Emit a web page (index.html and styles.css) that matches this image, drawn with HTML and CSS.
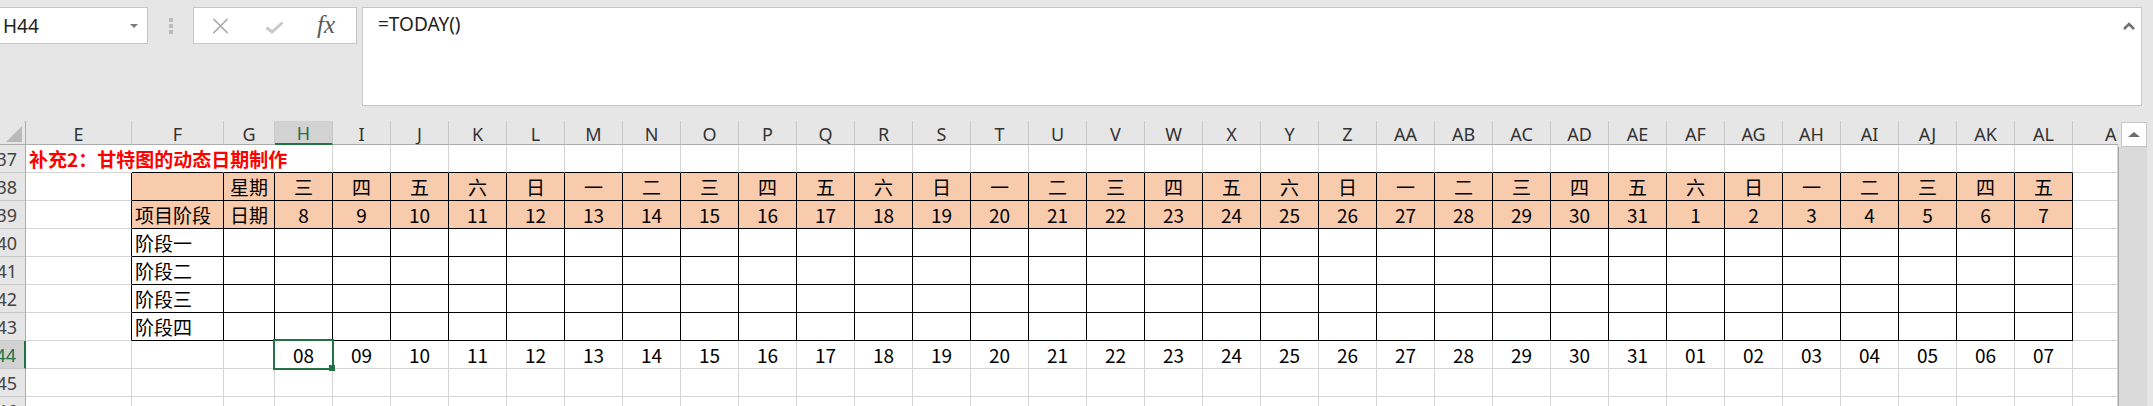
FILE: index.html
```html
<!DOCTYPE html>
<html lang="zh-CN">

<head>
    <meta charset="UTF-8">
    <title>甘特图的动态日期制作</title>
    <link rel="stylesheet" href="styles.css">
</head>

<body>
    <div class="formula-bar">
        <div class="name-box">
            <span>H44</span>
            <span class="drop-arrow"></span>
        </div>
        <div class="grip"><i></i><i></i><i></i></div>
        <div class="fx-box">
            <svg class="icon-cancel" width="17" height="16" viewBox="0 0 17 16">
                <path d="M1.5 1 L15.5 15 M15.5 1 L1.5 15" stroke="#a9a9a9" stroke-width="1.7" fill="none" />
            </svg>
            <svg class="icon-enter" width="19" height="13" viewBox="0 0 19 13">
                <path d="M1.5 6.5 L7 11 L17.5 1.5" stroke="#c9c9c9" stroke-width="3" fill="none" />
            </svg>
            <span class="fx">fx</span>
        </div>
        <div class="formula-input">
            <span>=TODAY()</span>
            <svg class="collapse" width="12" height="8" viewBox="0 0 12 8">
                <path d="M1 7 L6 2 L11 7" stroke="#707070" stroke-width="2.6" fill="none" />
            </svg>
        </div>
    </div>

    <div class="sheet">
        <div class="grid" id="grid"></div>
        <div class="vscroll">
            <div class="scroll-btn"><span class="tri-up"></span></div>
            <div class="scroll-track"></div>
        </div>
    </div>

    <script>
        const grid = document.getElementById('grid');
        const week = ['日', '一', '二', '三', '四', '五', '六'];
        const phases = ['阶段一', '阶段二', '阶段三', '阶段四'];

        function colName(i) {
            return i < 26 ? String.fromCharCode(65 + i) : 'A' + String.fromCharCode(39 + i);
        }

        function add(cls, text) {
            const d = document.createElement('div');
            d.className = 'c ' + cls;
            if (text !== undefined) d.textContent = text;
            grid.appendChild(d);
            return d;
        }

        // column headers
        add('corner').innerHTML = '<span class="tri"></span>';
        ['E', 'F', 'G'].forEach(l => add('ch', l));
        for (let i = 7; i < 38; i++) add(i === 7 ? 'ch on' : 'ch', colName(i));
        add('ch cut', 'AM');

        for (let r = 37; r <= 46; r++) {
            add(r === 44 ? 'rh on' : 'rh', r);

            if (r === 37) {
                add('title ov', '补充2：甘特图的动态日期制作');
                add('ov bt');
                add('ov bt');
                for (let k = 0; k < 31; k++) add('bt');
            } else if (r >= 38 && r <= 43) {
                add('bl');
                if (r === 38) {
                    add('t pk');
                    add('t pk', '星期');
                } else if (r === 39) {
                    add('t pk left', '项目阶段');
                    add('t pk', '日期');
                } else {
                    add('t left', phases[r - 40]);
                    add('t');
                }
                for (let k = 0; k < 31; k++) {
                    const date = k < 24 ? 8 + k : k - 23;
                    if (r === 38) add('t pk', week[(3 + k) % 7]);
                    else if (r === 39) add('t pk', date);
                    else add('t');
                }
            } else if (r === 44) {
                add('');
                add('');
                add('');
                for (let k = 0; k < 31; k++) {
                    const date = k < 24 ? 8 + k : k - 23;
                    const cell = add(k === 0 ? 'sel-cell' : '', String(date).padStart(2, '0'));
                    if (k === 0) cell.insertAdjacentHTML('beforeend', '<span class="sel"></span>');
                }
            } else {
                for (let k = 0; k < 34; k++) add('');
            }
            add('');
        }
    </script>
</body>

</html>
```

FILE: styles.css
```css
body {
    margin: 0;
    width: 2153px;
    height: 406px;
    overflow: hidden;
    background: #e6e6e6;
    font-family: "Noto Sans", Arial, sans-serif;
    color: #222;
}

/* formula bar */

.formula-bar {
    display: flex;
    align-items: flex-start;
    height: 121px;
    padding-top: 7px;
    box-sizing: border-box;
}

.name-box {
    display: flex;
    align-items: center;
    justify-content: space-between;
    width: 149px;
    height: 37px;
    margin-left: -1px;
    padding: 0 9px 0 3px;
    box-sizing: border-box;
    background: #fff;
    border: 1px solid #c6c6c6;
    font-size: 19px;
}

.drop-arrow {
    border-left: 4px solid transparent;
    border-right: 4px solid transparent;
    border-top: 4px solid #7a7a7a;
}

.grip {
    display: flex;
    flex-direction: column;
    align-items: center;
    gap: 2px;
    width: 45px;
    padding-top: 11px;
}

.grip i {
    width: 4px;
    height: 4px;
    background: #bcbcbc;
}

.fx-box {
    display: flex;
    align-items: center;
    width: 164px;
    height: 37px;
    padding-left: 18px;
    box-sizing: border-box;
    background: #fff;
    border: 1px solid #c6c6c6;
}

.icon-enter {
    margin-left: 36px;
    margin-top: 4px;
}

.fx {
    margin-left: 33px;
    font-family: "Liberation Serif", serif;
    font-style: italic;
    font-size: 25px;
    color: #5a5a5a;
    line-height: 1;
    margin-top: -3px;
}

.formula-input {
    display: flex;
    align-items: flex-start;
    justify-content: space-between;
    width: 1780px;
    height: 99px;
    margin-left: 5px;
    padding: 3px 6px 0 15px;
    box-sizing: border-box;
    background: #fff;
    border: 1px solid #c6c6c6;
    font-size: 19px;
    line-height: 26px;
}

.collapse {
    margin-top: 11px;
}

/* sheet */

.sheet {
    display: flex;
    height: 285px;
    overflow: hidden;
}

.grid {
    display: grid;
    grid-template-columns: 26px 106px 92px 51px repeat(31, 58px) 45px;
    grid-template-rows: 24px;
    grid-auto-rows: 28px;
    width: 2118px;
    background: #fff;
    font-family: "Noto Sans CJK SC", "Noto Sans", sans-serif;
    font-size: 19px;
    color: #000;
}

.c {
    display: flex;
    align-items: center;
    justify-content: center;
    min-width: 0;
    box-sizing: border-box;
    border-right: 1px solid #d4d4d4;
    border-bottom: 1px solid #d4d4d4;
    white-space: nowrap;
    line-height: 1;
}

.corner {
    align-items: flex-end;
    justify-content: flex-end;
    padding: 0 3px 2px 0;
    background: #e6e6e6;
    border-right-color: #ababab;
    border-bottom-color: #ababab;
}

.corner .tri {
    border-left: 16px solid transparent;
    border-bottom: 16px solid #b9b9b9;
}

.ch {
    padding-top: 2px;
    background: #e6e6e6;
    border-right-color: #c9c9c9;
    border-bottom-color: #ababab;
    font-family: "Noto Sans", sans-serif;
    font-size: 18px;
    color: #333;
}

.ch.on {
    background: #d2d2d2;
    color: #217346;
    border-bottom: 2px solid #217346;
}

.ch.cut {
    justify-content: flex-start;
    padding-left: 32px;
    overflow: hidden;
    border-right: none;
}

.rh {
    justify-content: flex-end;
    padding-right: 8px;
    overflow: hidden;
    background: #e6e6e6;
    border-right-color: #ababab;
    border-bottom-color: #c9c9c9;
    font-family: "Noto Sans", sans-serif;
    font-size: 18px;
    color: #444;
}

.rh.on {
    background: #d2d2d2;
    color: #217346;
    border-right: 2px solid #217346;
}

.title {
    justify-content: flex-start;
    padding-left: 3px;
    overflow: visible;
    color: #ff0000;
    font-weight: bold;
}

.ov {
    border-right-color: transparent;
}

.bt {
    border-bottom-color: #000;
}

.bl {
    border-right-color: #000;
}

.t {
    border-right-color: #000;
    border-bottom-color: #000;
}

.pk {
    background: #f8cbad;
}

.left {
    justify-content: flex-start;
    padding-left: 3px;
}

.sel-cell {
    position: relative;
}

.sel {
    position: absolute;
    left: -2px;
    top: -2px;
    width: 61px;
    height: 31px;
    box-sizing: border-box;
    border: 2px solid #217346;
    z-index: 2;
}

.sel::after {
    content: "";
    position: absolute;
    left: 54px;
    top: 24px;
    width: 6px;
    height: 6px;
    background: #217346;
}

/* scroll bar */

.vscroll {
    display: flex;
    flex-direction: column;
    width: 35px;
    background: #e6e6e6;
}

.scroll-btn {
    display: flex;
    align-items: center;
    justify-content: center;
    width: 26px;
    height: 25px;
    margin: 1px 0 0 3px;
    box-sizing: border-box;
    background: #fff;
    border: 1px solid #c6c6c6;
}

.tri-up {
    border-left: 6px solid transparent;
    border-right: 6px solid transparent;
    border-bottom: 5px solid #6d6d6d;
}

.scroll-track {
    flex: 1;
    width: 29px;
    box-sizing: border-box;
    background: #dadada;
    border-left: 1px solid #a6a6a6;
}
```
